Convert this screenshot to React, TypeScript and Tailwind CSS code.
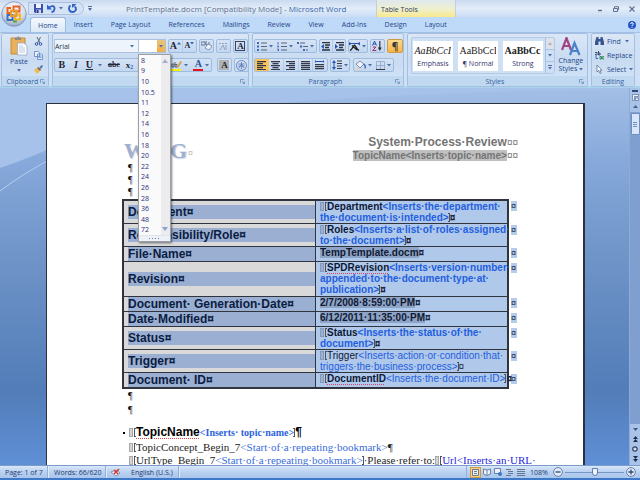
import React from "react";

const sizes = ["8", "9", "10", "10.5", "11", "12", "14", "16", "18", "20", "22", "24", "26", "28", "36", "48", "72"];
const tabs = ["Home", "Insert", "Page Layout", "References", "Mailings", "Review", "View", "Add-Ins", "Design", "Layout"];

function Down({ className = "" }: { className?: string }) {
  return (
    <svg viewBox="0 0 4 3" className={`h-[3px] w-[4px] shrink-0 ${className}`}>
      <path d="M0 0h4L2 2.6z" fill="#4c6fa8" />
    </svg>
  );
}

function Tool({ label, className = "", children }: { label: string; className?: string; children: React.ReactNode }) {
  return (
    <button aria-label={label} className={`flex h-full shrink-0 items-center justify-center gap-[2px] ${className}`}>
      {children}
    </button>
  );
}

function Strip({ className = "", children }: { className?: string; children: React.ReactNode }) {
  return (
    <div className={`flex h-[14px] shrink-0 rounded-[2px] border border-[#9ebbe0] bg-gradient-to-b from-[#d5e3f5] to-[#c3d7f0] ${className}`}>
      {children}
    </div>
  );
}

function Group({ title, launcher = true, className = "", children }: { title: string; launcher?: boolean; className?: string; children: React.ReactNode }) {
  return (
    <section className={`flex h-[54px] flex-col rounded-[2px] border border-[#a3c0e4] bg-gradient-to-b from-[#dbe7f6] via-[#c9dbf1] to-[#d3e5f8] ${className}`}>
      <div className="flex-1">{children}</div>
      <div className="flex h-[10px] items-center bg-[#c1d8f1] px-[3px] text-[#355f9e]">
        <span className="flex-1 text-center">{title}</span>
        {launcher && (
          <button aria-label={`${title} options`}>
            <svg viewBox="0 0 5 5" className="h-[5px] w-[5px]" fill="none" stroke="#6c8fc0">
              <path d="M.5 4V.5H4M2 2l2.500 2.500M4.500 2.500v2h-2" strokeWidth=".8" />
            </svg>
          </button>
        )}
      </div>
    </section>
  );
}

function Lines({ widths, x = "left" }: { widths: number[]; x?: "left" | "center" | "right" }) {
  return (
    <svg viewBox="0 0 9 9" className="h-[9px] w-[9px]" fill="#34394a">
      {widths.map((w, i) => (
        <rect key={i} x={x === "left" ? 0 : x === "right" ? 9 - w : (9 - w) / 2} y={i * 2} width={w} height="1.3" />
      ))}
    </svg>
  );
}

function OfficeButton() {
  return (
    <button aria-label="Office Button" className="absolute left-[1px] top-[1px] z-10 h-[26px] w-[26px]">
      <svg viewBox="0 0 26 26" className="h-full w-full">
        <defs>
          <radialGradient id="orb" cx=".5" cy=".3" r=".75">
            <stop offset="0" stopColor="#fff" />
            <stop offset=".6" stopColor="#d5dde9" />
            <stop offset="1" stopColor="#8498b8" />
          </radialGradient>
        </defs>
        <circle cx="13" cy="13" r="12.300" fill="url(#orb)" stroke="#7d93b8" strokeWidth=".8" />
        <g fill="none" strokeWidth="2">
          <path d="M10 7H6.500v5H10" stroke="#e8641b" />
          <path d="M12.500 5.500h6v5h-6z" stroke="#e9622a" />
          <path d="M6.500 14h5v5h-5z" stroke="#3b6fc4" />
          <path d="M14 13.500h5v5h-5z" stroke="#f1b420" />
          <path d="M10 9.500h5.500V15H10z" stroke="#e99b2d" />
          <path d="M12 20.500h4" stroke="#5aa13a" />
        </g>
      </svg>
    </button>
  );
}

function TitleBar() {
  return (
    <header className="relative flex h-[17px] items-center bg-gradient-to-b from-[#c9daf0] via-[#e3edf9] to-[#cadcf4]">
      <OfficeButton />
      <div className="ml-[28px] flex h-[13px] w-[56px] items-center rounded-r-[7px] border border-[#a9c0e0] bg-[#d5e3f5] pl-[5px]">
        <button aria-label="Save">
          <svg viewBox="0 0 9 9" className="h-[9px] w-[9px]">
            <path d="M0 0h9v9H1L0 8z" fill="#3b4fae" />
            <path d="M2 0h5v4H2z" fill="#eef3fc" />
            <path d="M2.500 5.500h4.500V9H2.500z" fill="#c8d4ee" />
            <path d="M3 6h1.500v3H3z" fill="#27347e" />
          </svg>
        </button>
        <button aria-label="Undo" className="ml-[4px]">
          <svg viewBox="0 0 9 9" className="h-[9px] w-[9px]" fill="none" stroke="#2f62c9" strokeWidth="1.800">
            <path d="M2 3.500C5 1 8 2 7.500 5 7.200 7 6 8 4.500 8.200" />
            <path d="M0 .5v5h5z" fill="#2f62c9" stroke="none" />
          </svg>
        </button>
        <Down className="ml-[3px]" />
        <button aria-label="Repeat" className="ml-[5px]">
          <svg viewBox="0 0 9 9" className="h-[9px] w-[9px]" fill="none" stroke="#2f62c9" strokeWidth="1.800">
            <path d="M2.500 1.500C0 3.500.8 8 4.500 8S9 4 6.500 2.500" />
            <path d="M4 0h4.500L4 4z" fill="#2f62c9" stroke="none" />
          </svg>
        </button>
      </div>
      <button aria-label="Customize Quick Access Toolbar" className="ml-[4px]">
        <svg viewBox="0 0 4 5" className="h-[5px] w-[4px]" fill="#4c6fa8"><path d="M0 0h4v1H0zM0 2h4L2 5z" /></svg>
      </button>
      <h1 className="ml-[34px] w-[250px] whitespace-nowrap text-[8px] text-[#5f7190]">
        PrintTemplate.docm [Compatibility Mode] - <span className="text-[#3865aa]">Microsoft Word</span>
      </h1>
      <div className="flex h-full w-[80px] items-center border-x border-[#c5cfd6] bg-gradient-to-b from-[#dfe8ee] via-[#eef0cf] to-[#f8e98c] pl-[4px] pt-[2px] text-[#2c3d66]">
        Table Tools
      </div>
      <div className="ml-auto mr-[5px] flex items-center gap-[10px]">
        <button aria-label="Minimize"><svg viewBox="0 0 6 6" className="h-[6px] w-[6px]"><path d="M1 4.500h4" stroke="#5f7391" strokeWidth="1.500" /></svg></button>
        <button aria-label="Restore"><svg viewBox="0 0 6 6" className="h-[6px] w-[6px]" fill="none" stroke="#5f7391"><path d="M1.500 2V.7h4v3H4.500M.5 2.500h4v3h-4z" /></svg></button>
        <button aria-label="Close"><svg viewBox="0 0 6 6" className="h-[6px] w-[6px]"><path d="M.5.5l5 5M5.500.5l-5 5" stroke="#5f7391" strokeWidth="1.200" /></svg></button>
      </div>
    </header>
  );
}

function Tabs() {
  return (
    <nav className="flex h-[15px] items-stretch bg-[#bfd9f8] pl-[30px]">
      {tabs.map((t, i) => (
        <button
          key={t}
          className={
            i === 0
              ? "mr-[-1px] rounded-t-[3px] border border-b-0 border-[#9db9de] bg-gradient-to-b from-[#f4f8fd] to-[#dce8f7] px-[7px] text-[#1e4689]"
              : "px-[9px] text-[#1e4689]"
          }
        >
          {t}
        </button>
      ))}
      <button aria-label="Help" className="ml-auto mr-[4px]">
        <svg viewBox="0 0 8 8" className="h-[8px] w-[8px]">
          <circle cx="4" cy="4" r="4" fill="#2457c0" />
          <path d="M2.600 3C2.600 1.300 5.400 1.300 5.400 3 5.400 4 4 3.800 4 5M4 5.700v1" stroke="#fff" fill="none" />
        </svg>
      </button>
    </nav>
  );
}

function Clipboard() {
  return (
    <Group title="Clipboard" className="w-[50px]">
      <div className="flex pl-[6px]">
        <button className="flex w-[22px] flex-col items-center pt-[2px] text-[#1e4689]">
          <svg viewBox="0 0 18 20" className="h-[20px] w-[18px]">
            <path d="M1 2h14v16H1z" fill="#e9b15c" stroke="#c58b36" />
            <path d="M5 1.500h2.500C7.500-.2 9 -.2 9 1.500H11V4H5z" fill="#8e8d8c" />
            <path d="M7.500 7H14l3 3v9H7.500z" fill="#fbfcff" stroke="#9ba9c1" strokeWidth=".8" />
            <path d="M9 10h4M9 12h6M9 14h6M9 16h6" stroke="#a8b8d4" strokeWidth=".7" />
          </svg>
          <span className="leading-[12px]">Paste</span>
          <Down className="mt-[1px]" />
        </button>
        <div className="ml-[4px] flex flex-col gap-[5px] pt-[3px]">
          <button aria-label="Cut">
            <svg viewBox="0 0 9 9" className="h-[9px] w-[9px]" fill="none" stroke="#3458a5">
              <path d="M3 0l3 6M6.500 0L3.500 6" stroke="#5a6577" />
              <circle cx="2.500" cy="7" r="1.300" /><circle cx="6.500" cy="7" r="1.300" />
            </svg>
          </button>
          <button aria-label="Copy">
            <svg viewBox="0 0 9 9" className="h-[9px] w-[9px]" fill="#e8f0fd" stroke="#5a83c4" strokeWidth=".8">
              <path d="M.5.5h4l1 1v4h-5zM3.500 3h4l1 1v4.500h-5z" /><path d="M4.500 5h3M4.500 6.500h3" />
            </svg>
          </button>
          <button aria-label="Format Painter">
            <svg viewBox="0 0 9 9" className="h-[9px] w-[9px]">
              <path d="M0 5l3-2 3 3-3 3z" fill="#eebb4d" /><path d="M3 3l1.500-1L7 4.500 6 6z" fill="#81634a" /><path d="M5.500 2L8 0l1 1-2 3z" fill="#4c72b6" />
            </svg>
          </button>
        </div>
      </div>
    </Group>
  );
}

function FontSizeMenu() {
  return (
    <div className="absolute left-[-1px] top-[14px] z-20 flex h-[188px] w-[33px] flex-col border border-[#9a9fa8] bg-[#fafafa] shadow-[1px_1px_2px_rgba(0,0,0,0.5)]">
      <div className="flex flex-1">
        <ul className="flex flex-1 flex-col text-[#2c2f7c]">
          {sizes.map((s) => (
            <li key={s} className="flex min-h-0 flex-1 items-center">
              <button className="h-full pl-[2px] leading-none">{s}</button>
            </li>
          ))}
        </ul>
        <div className="flex w-[9px] flex-col items-center justify-between bg-[#ececee] py-[4px]">
          <svg viewBox="0 0 6 4" className="h-[4px] w-[6px]"><path d="M0 4h6L3 0z" fill="#a4b0cc" /></svg>
          <svg viewBox="0 0 6 4" className="h-[4px] w-[6px]"><path d="M0 0h6L3 4z" fill="#8ba0cf" /></svg>
        </div>
      </div>
      <div className="flex h-[6px] items-center justify-center gap-[2px] border-t border-[#dfe3ea] bg-[#eef2f8]">
        {[0, 1, 2, 3].map((i) => <i key={i} className="h-px w-px bg-[#6d7ea8]" />)}
      </div>
    </div>
  );
}

function FontGroup() {
  const serif = "font-['Liberation_Serif',serif] text-[#222838]";
  return (
    <Group title="Font" className="w-[197px]">
      <div className="flex flex-col gap-[5px] pl-[1px] pt-[5px]">
        <div className="flex h-[14px]">
          <div className="flex w-[85px] items-center border border-[#abc1de] bg-[#eef4fc] pr-[4px]">
            <select aria-label="Font" className="w-full appearance-none bg-transparent text-[#26303f]">
              <option>Arial</option>
            </select>
            <Down />
          </div>
          <div className="relative flex w-[27px] border border-l-0 border-[#abc1de]">
            <input aria-label="Font Size" className="w-[18px] bg-white" />
            <button aria-label="Choose size" className="flex w-[8px] items-center justify-center bg-gradient-to-b from-[#e8c47c] to-[#f3ad3b]"><Down /></button>
            <FontSizeMenu />
          </div>
          <Strip className="ml-[2px] w-[29px]">
            <Tool label="Grow Font" className={`w-[14px] border-r border-[#b5cbe8] text-[10px] font-bold ${serif}`}>A<svg viewBox="0 0 4 8" className="-ml-[2px] h-[8px] w-[4px]"><path d="M0 2.500h4L2 0z" fill="#3562b5" /></svg></Tool>
            <Tool label="Shrink Font" className={`w-[13px] text-[8px] font-bold ${serif}`}>A<svg viewBox="0 0 4 8" className="-ml-[2px] h-[8px] w-[4px]"><path d="M0 0h4L2 2.500z" fill="#3562b5" /></svg></Tool>
          </Strip>
          <Strip className="ml-[2px] w-[15px]">
            <Tool label="Clear Formatting" className="w-full">
              <svg viewBox="0 0 11 10" className="h-[10px] w-[11px]"><path d="M0 4V1h4v3zM5 0v4h3V1" fill="none" stroke="#5f6b83" strokeWidth=".9" /><path d="M4 7l3-4 4 2-3 4z" fill="#f3f5fb" stroke="#6a7db0" strokeWidth=".8" /></svg>
            </Tool>
          </Strip>
          <Strip className="ml-[2px] w-[15px]">
            <Tool label="Phonetic Guide" className="w-full">
              <svg viewBox="0 0 11 10" className="h-[10px] w-[11px]" fill="none" stroke="#94a5c2"><path d="M1 2.500h2M4 2.500h2M7 2.500h2M2 9l3-5 2 5M8 4v5" /></svg>
            </Tool>
          </Strip>
          <Strip className="ml-[2px] w-[15px]">
            <Tool label="Character Border" className="w-full"><span className={`flex h-[10px] w-[10px] items-center justify-center border border-[#39435c] text-[9px] font-bold leading-none ${serif}`}>A</span></Tool>
          </Strip>
        </div>
        <div className="flex h-[14px]">
          <Strip className="w-[112px]">
            <Tool label="Bold" className={`w-[14px] text-[10px] font-bold ${serif}`}>B</Tool>
            <Tool label="Italic" className={`w-[14px] text-[10px] font-bold italic ${serif}`}>I</Tool>
            <Tool label="Underline" className={`w-[22px] text-[10px] font-bold ${serif}`}><span className="underline">U</span><Down className="ml-[3px]" /></Tool>
            <Tool label="Strikethrough" className={`w-[18px] text-[8px] font-bold line-through ${serif}`}>abc</Tool>
            <Tool label="Subscript" className={`w-[13px] text-[9px] font-bold ${serif}`}>x<sub className="-ml-[2px] text-[6px] text-[#3562b5]">2</sub></Tool>
          </Strip>
          <Strip className="ml-[2px] w-[44px]">
            <Tool label="Text Highlight Color" className="w-[22px]">
              <svg viewBox="0 0 11 11" className="h-[11px] w-[11px]"><path d="M0 9h10v2H0z" fill="#fbf400" /><path d="M1 4h2v3H1zM4 2v5h2V4.500H4" stroke="#4c5468" fill="none" strokeWidth=".9" /><path d="M5.500 7L9.500 1l1.500 1-4 6z" fill="#d7a040" /></svg>
              <Down />
            </Tool>
            <Tool label="Font Color" className="w-[21px]">
              <span className="flex h-[11px] w-[10px] items-center justify-center border-b-2 border-[#e5131b] font-['Liberation_Serif',serif] text-[10px] font-bold leading-none text-[#2f4f9a]">A</span>
              <Down />
            </Tool>
          </Strip>
          <Strip className="ml-[5px] w-[15px]">
            <Tool label="Character Shading" className="w-full"><span className={`flex h-[10px] w-[10px] items-center justify-center bg-[#b1b1b1] text-[9px] font-bold leading-none ${serif}`}>A</span></Tool>
          </Strip>
          <Strip className="ml-[2px] w-[15px]">
            <Tool label="Enclose Characters" className="w-full">
              <svg viewBox="0 0 11 11" className="h-[11px] w-[11px]" fill="none" stroke="#6585b8" strokeWidth=".9"><circle cx="5.500" cy="5.500" r="5" /><path d="M2.500 4h6M5.500 2v7M3 8l2.500-4L8 8M2.500 6h6" /></svg>
            </Tool>
          </Strip>
        </div>
      </div>
    </Group>
  );
}

function Paragraph() {
  return (
    <Group title="Paragraph" className="w-[152px]">
      <div className="flex flex-col gap-[5px] pl-[1px] pt-[5px]">
        <div className="flex h-[14px]">
          <Strip className="w-[63px]">
            <Tool label="Bullets" className="w-[20px]">
              <svg viewBox="0 0 10 9" className="h-[9px] w-[10px]"><path d="M0 0h2v2H0zM0 3.500h2v2H0zM0 7h2v2H0z" fill="#3c68bd" /><path d="M4 1h6M4 4.500h6M4 8h6" stroke="#59657d" /></svg><Down />
            </Tool>
            <Tool label="Numbering" className="w-[21px]">
              <svg viewBox="0 0 10 9" className="h-[9px] w-[10px]"><path d="M1 0v2.500M.3 4h1.200v1H.3M.3 7h1.200v2H.3" stroke="#3c68bd" fill="none" /><path d="M4 1h6M4 4.500h6M4 8h6" stroke="#59657d" /></svg><Down />
            </Tool>
            <Tool label="Multilevel List" className="w-[20px]">
              <svg viewBox="0 0 11 9" className="h-[9px] w-[11px]"><path d="M0 0h2v2H0zM3 3.500h2v2H3zM6 7h2v2H6z" fill="#3c68bd" /><path d="M3 1h5M6 4.500h5M9 8h2" stroke="#59657d" /></svg><Down />
            </Tool>
          </Strip>
          <Strip className="ml-[2px] w-[27px]">
            <Tool label="Decrease Indent" className="w-[13px] border-r border-[#b5cbe8]">
              <svg viewBox="0 0 9 9" className="h-[9px] w-[9px]"><path d="M0 4.500l3-2.500v5z" fill="#2854b4" /><path d="M1 .6h8M4 3h5M4 5.500h4M1 8h8" stroke="#2a3040" strokeWidth="1.300" /></svg>
            </Tool>
            <Tool label="Increase Indent" className="w-[13px]">
              <svg viewBox="0 0 9 9" className="h-[9px] w-[9px]"><path d="M3 4.500L0 2v5z" fill="#2854b4" /><path d="M1 .6h8M4 3h5M4 5.500h4M1 8h8" stroke="#2a3040" strokeWidth="1.300" /></svg>
            </Tool>
          </Strip>
          <Strip className="ml-[2px] w-[20px]">
            <Tool label="Asian Layout" className="w-full">
              <svg viewBox="0 0 11 9" className="h-[9px] w-[11px]"><path d="M1 8.500C3 8 5 3 5.500 3S8 8 10 8.500M3 3.500L8 8" stroke="#222" strokeWidth="1.300" fill="none" /><path d="M0 0v3.500L3 1.500zM11 0v3.500L8 1.500z" fill="#2854b4" /><path d="M2 1.500h7" stroke="#2854b4" /></svg><Down />
            </Tool>
          </Strip>
          <Strip className="ml-[2px] w-[15px]">
            <Tool label="Sort" className="w-full">
              <svg viewBox="0 0 10 10" className="h-[10px] w-[10px]" fill="none"><path d="M.5 4.500L2.500 0l2 4.500M1 3h3" stroke="#2854b4" /><path d="M.8 6h3L.8 9.500h3.500" stroke="#a32c65" /><path d="M7.800 0v8" stroke="#333" strokeWidth="1.200" /><path d="M5.800 6.500h4L7.800 10z" fill="#333" /></svg>
            </Tool>
          </Strip>
          <div className="ml-[2px] flex h-[14px] w-[16px] rounded-[2px] border border-[#c99c4b] bg-gradient-to-b from-[#fbd98e] to-[#f9b544]">
            <Tool label="Show/Hide" className="w-full text-[10px] font-bold text-[#3d3a35]">¶</Tool>
          </div>
        </div>
        <div className="flex h-[14px]">
          <Strip className="w-[74px]">
            <Tool label="Align Left" className="w-[14px] bg-[#fbc45d]"><Lines widths={[9, 6, 9, 6, 9]} /></Tool>
            <Tool label="Center" className="w-[15px] border-r border-[#b5cbe8]"><Lines widths={[9, 6, 9, 6, 9]} x="center" /></Tool>
            <Tool label="Align Right" className="w-[15px] border-r border-[#b5cbe8]"><Lines widths={[9, 6, 9, 6, 9]} x="right" /></Tool>
            <Tool label="Justify" className="w-[14px] border-r border-[#b5cbe8]"><Lines widths={[9, 9, 9, 9, 9]} /></Tool>
            <Tool label="Distributed" className="w-[14px]">
              <svg viewBox="0 0 9 10" className="h-[10px] w-[9px]"><path d="M0 1.500h9M0 0v3M9 0v3" stroke="#2854b4" /><path d="M0 4h9v1.300H0zM0 6h9v1.300H0zM0 8h9v1.300H0z" fill="#34394a" /></svg>
            </Tool>
          </Strip>
          <Strip className="ml-[2px] w-[20px]">
            <Tool label="Line Spacing" className="w-full">
              <svg viewBox="0 0 10 10" className="h-[10px] w-[10px]"><path d="M0 3h4L2 0zM0 7h4l-2 3z" fill="#2854b4" /><path d="M2 2v6" stroke="#2854b4" /><path d="M5 1h5M5 3.500h5M5 6h5M5 8.500h5" stroke="#34394a" /></svg><Down />
            </Tool>
          </Strip>
          <Strip className="ml-[3px] w-[41px]">
            <Tool label="Shading" className="w-[20px]">
              <svg viewBox="0 0 11 10" className="h-[10px] w-[11px]"><path d="M1 4l4-3 4 3-4 4z" fill="#eef3fb" stroke="#7387aa" strokeWidth=".9" /><path d="M8.500 4c2 1 2 3 1.500 4.500" stroke="#2d64bf" strokeWidth="1.300" fill="none" /><path d="M0 8.600h7V10H0z" fill="#e3d1c0" /></svg><Down />
            </Tool>
            <Tool label="Borders" className="w-[20px]">
              <svg viewBox="0 0 9 9" className="h-[9px] w-[9px]" fill="none"><path d="M.5.5h8v8M.5.5v8M4.500 0v9M0 4.500h9" stroke="#8fa5c8" strokeWidth=".8" /><path d="M0 8.500h9" stroke="#34394a" /></svg><Down />
            </Tool>
          </Strip>
        </div>
      </div>
    </Group>
  );
}

function Style({ sample, name }: { sample: string; name: string }) {
  const look = name === "Emphasis" ? "italic" : name === "Strong" ? "font-bold" : "";
  return (
    <button className="flex h-[30px] w-[40px] shrink-0 flex-col items-center bg-white pt-[3px]">
      <span className={`w-[37px] overflow-hidden whitespace-nowrap text-left font-['Liberation_Serif',serif] text-[10px] leading-[14px] text-[#222] ${look}`}>{sample}</span>
      <span className="leading-[12px] text-[#34356f]">{name}</span>
    </button>
  );
}

function Styles() {
  return (
    <Group title="Styles" className="min-w-[181px] flex-1">
      <div className="flex pl-[3px] pt-[3px]">
        <div className="flex h-[37px] min-w-0 flex-1 overflow-hidden rounded-[2px] border border-[#b3c9e6] bg-[#cfe0f4]">
          <div className="flex flex-1 gap-[5px] py-[3px] pl-px">
            <Style sample="AaBbCcI" name="Emphasis" />
            <Style sample="AaBbCcI" name="¶ Normal" />
            <Style sample="AaBbCcI" name="Strong" />
          </div>
          <div className="flex w-[9px] flex-col border-l border-[#a9c2e3]">
            <button aria-label="Styles up" className="flex flex-1 items-center justify-center bg-[#dfe3e9]"><svg viewBox="0 0 4 3" className="h-[3px] w-[4px]"><path d="M0 3h4L2 0z" fill="#a7b1c2" /></svg></button>
            <button aria-label="Styles down" className="flex flex-1 items-center justify-center border-y border-[#a9c2e3] bg-[#cfe0f6]"><Down /></button>
            <button aria-label="More styles" className="flex flex-1 flex-col items-center justify-center gap-px bg-[#cfe0f6]"><i className="h-px w-[4px] bg-[#4c6fa8]" /><Down /></button>
          </div>
        </div>
        <button className="flex w-[32px] flex-col items-center text-[#1e4689]">
          <svg viewBox="0 0 20 20" className="h-[20px] w-[20px]" fill="none" strokeWidth="2.200">
            <path d="M1 13L5.500 1 10 13M3 9h5" stroke="#a24482" />
            <path d="M9 18l4.500-12L18.500 18M11 14h5" stroke="#4b80cd" />
          </svg>
          <span className="leading-[8px]">Change</span>
          <span className="flex items-center gap-[2px] leading-[8px]">Styles <Down /></span>
        </button>
      </div>
    </Group>
  );
}

function Editing() {
  const row = "flex h-[14px] items-center text-[#1e4689]";
  return (
    <Group title="Editing" launcher={false} className="w-[46px]">
      <div className="flex flex-col pl-[3px]">
        <button className={row}>
          <svg viewBox="0 0 9 8" className="mr-[3px] h-[8px] w-[9px]" fill="#37558f"><path d="M1.500 0h2v2h2V0h2L9 5v3H5.500V4.500h-2V8H0V5z" /></svg>
          Find <Down className="ml-[4px]" />
        </button>
        <button className={row}>
          <svg viewBox="0 0 9 9" className="mr-[3px] h-[9px] w-[9px]" fill="none"><path d="M0 1.500h2v2.500H.5V3M3.500 0v4H5V2H4" stroke="#3f4e70" /><path d="M5 5.500h1.500V8H5zM9 5.500H7.800V8H9" stroke="#2c8a55" /><path d="M1 5v2.500h2" stroke="#3c68bd" /></svg>
          Replace
        </button>
        <button className={row}>
          <svg viewBox="0 0 9 9" className="mr-[3px] h-[9px] w-[9px]"><path d="M2 0v7l1.700-1.500L5 8.500l1.200-.6L5 5.200h2z" fill="#fff" stroke="#5e7197" strokeWidth=".8" /></svg>
          Select <Down className="ml-[3px]" />
        </button>
      </div>
    </Group>
  );
}

function Field({ name, hint, spell = false, tight = false }: { name: string; hint: React.ReactNode; spell?: boolean; tight?: boolean }) {
  return (
    <>
      <Mark />
      <span className={`text-[#0c1838] ${spell ? "underline decoration-[#d2486b] decoration-dotted decoration-1 underline-offset-2" : ""}`}>{name}</span>
      <span className={`text-[#1f5fe0] ${tight ? "font-normal" : ""}`}>{hint}</span>
      <Bracket />
    </>
  );
}

function Mark({ gray = false }: { gray?: boolean }) {
  return (
    <span aria-hidden="true" className="inline-flex h-[9px] items-stretch gap-px align-[-1px]">
      <i className={`w-[4px] border ${gray ? "border-[#a8a8a8] bg-[#d4d4d4]" : "border-[#8499bd] bg-[#9db0d0]"}`} />
      <i className="w-[2px] border-y border-l border-[#4b5465]" />
    </span>
  );
}

function Bracket() {
  return <i aria-hidden="true" className="-ml-px inline-block h-[9px] w-[2px] border-y border-r border-[#4b5465] align-[-1px]" />;
}

const end = <span className="text-[#1b2440]">¤</span>;

const rows: { label: string; h: string; value: React.ReactNode }[] = [
  { label: "Document", h: "h-[24px]", value: <><Field name="Department" hint={<>&lt;Inserts·the·department·<br />the·document·is·intended&gt;</>} />{end}</> },
  { label: "Responsibility/Role", h: "h-[23px]", value: <><Field name="Roles" hint={<>&lt;Inserts·a·list·of·roles·assigned·<br />to·the·document&gt;</>} />{end}</> },
  { label: "File·Name", h: "h-[15px]", value: <><span className="bg-[#8ea4c6]">TempTemplate.docm</span>{end}</> },
  { label: "Revision", h: "h-[35px]", value: <><Field spell name="SPDRevision" hint={<>&lt;Inserts·version·number·<br />appended·to·the·document·type·at·<br />publication&gt;</>} />{end}</> },
  { label: "Document· Generation·Date", h: "h-[15px]", value: <><span className="bg-[#8ea4c6]">2/7/2008·8:59:00·PM</span>{end}</> },
  { label: "Date·Modified", h: "h-[15px]", value: <><span className="bg-[#8ea4c6]">6/12/2011·11:35:00·PM</span>{end}</> },
  { label: "Status", h: "h-[23px]", value: <><Field name="Status" hint={<>&lt;Inserts·the·status·of·the·<br />document&gt;</>} />{end}</> },
  { label: "Trigger", h: "h-[23px]", value: <span className="font-normal"><Field tight name="Trigger" hint={<>&lt;Inserts·action·or·condition·that·<br />triggers·the·business·process&gt;</>} />{end}</span> },
  { label: "Document· ID", h: "h-[17px]", value: <><Field spell tight name="DocumentID" hint="<Inserts·the·document·ID>" />{end}</> },
];

function Para({ className = "" }: { className?: string }) {
  return <p className={`pl-[6px] font-['Liberation_Serif',serif] text-[10px] text-[#111] ${className}`}>¶</p>;
}

function Page() {
  return (
    <main className="relative mt-[15px] min-w-0 flex-1 overflow-hidden border-l border-t border-r-2 border-[#2c3140] bg-white px-[75px] pt-[31px] font-['Liberation_Sans',sans-serif]">
      <div className="-mr-[10px] flex h-[27px] items-start justify-between">
        <div className="-mt-px ml-[2px] flex w-[80px] items-center whitespace-nowrap font-['Liberation_Serif',serif] text-[22px] font-bold leading-[30px] text-[#9fb0cc] [text-shadow:1px_1px_1px_#c9d3e4]">
          <span className="w-[46px]">W</span>
          <span>G</span>
          <span className="ml-px pt-[4px] text-[9px] font-normal text-[#777] [text-shadow:none]">¤</span>
        </div>
        <div className="whitespace-nowrap text-right font-bold text-[#747474]">
          <div className="text-[12px] leading-[15px]">System·Process·Review<span className="text-[10px] font-normal">¤¤</span></div>
          <div className="text-[10px] leading-[12px]"><span className="bg-[#c0c0c0]">TopicName&lt;Inserts·topic·name&gt;</span><span className="font-normal">¤¤</span></div>
        </div>
      </div>
      <Para className="h-[12px] leading-[12px]" />
      <Para className="h-[12px] leading-[12px]" />
      <Para className="h-[13px] leading-[12px]" />
      <div className="-mr-[9px]">
        <table className="w-full table-fixed border-separate border-spacing-0">
          <colgroup><col className="w-[193px]" /><col /><col className="w-[8px]" /></colgroup>
          <tbody>
            {rows.map((r, i) => {
              const edge = `${i === 0 ? "border-t-2" : "border-t"} ${i === rows.length - 1 ? "border-b-2" : ""} border-[#30343f]`;
              return (
                <tr key={r.label} className={r.h}>
                  <th className={`border-l-2 bg-[#d9d9d9] p-0 pl-[4px] text-left align-middle ${edge}`}>
                    <div className="h-[14px] whitespace-nowrap bg-[#9aafd1] text-[12px] leading-[14px] text-[#0b1c42]">{r.label}<span>¤</span></div>
                  </th>
                  <td className={`whitespace-nowrap border-l border-r-2 bg-[#b0c8ea] p-0 pl-[4px] align-top text-[10px] font-bold leading-[11px] text-[#101a35] ${edge}`}>{r.value}</td>
                  <td className="p-0 pl-[2px] pt-[2px] align-top text-[9px] leading-[10px] text-[#1b2440]"><span className="block bg-[#b6cbea]">¤</span></td>
                </tr>
              );
            })}
          </tbody>
        </table>
      </div>
      <Para className="h-[14px] leading-[13px]" />
      <Para className="h-[14px] leading-[13px]" />
      <h2 className="relative mt-[7px] h-[16px] whitespace-nowrap pl-[7px] text-[12px] font-bold leading-[16px] text-black before:absolute before:left-[1px] before:top-[8px] before:h-[2px] before:w-[2px] before:bg-black">
        <Mark gray />
        <span className="underline decoration-[#e04a4a] decoration-dotted decoration-1 underline-offset-2">TopicName</span>
        <span className="font-['Liberation_Serif',serif] text-[10px] text-[#2b63e0]">&lt;Inserts· topic·name&gt;</span>
        <Bracket />¶
      </h2>
      <div className="mt-px whitespace-nowrap pl-[7px] font-['Liberation_Serif',serif] text-[11px] leading-[13px] text-[#1c1c1c]">
        <p><Mark gray />TopicConcept_Begin_7<span className="text-[#3a6ddb]">&lt;Start·of·a·repeating·bookmark&gt;</span>¶</p>
        <p><Mark gray />UrlType_Begin_7<span className="text-[#3a6ddb]">&lt;Start·of·a·repeating·bookmark&gt;</span><Bracket />·Please·refer·to:<Mark gray /><span className="text-[#2626e0]"><span className="underline decoration-[#e04a4a] decoration-dotted decoration-1">Url</span>&lt;Inserts·an·URL·</span></p>
      </div>
    </main>
  );
}

function ScrollBar() {
  return (
    <aside className="relative flex w-[11px] flex-col items-center border-l border-[#8fabd6] bg-[#a9c3e8]">
      <i className="mt-[2px] h-[2px] w-[6px] bg-[#33496f]" />
      <button aria-label="View Ruler" className="mt-[2px]"><svg viewBox="0 0 7 7" className="h-[7px] w-[7px]" fill="#eef3fb" stroke="#6a7d9f"><path d="M.5.5h6v2h-4v4h-2zM3.500 4h3v2.500h-3z" strokeWidth=".8" /></svg></button>
      <button aria-label="Scroll up" className="flex h-[11px] items-center"><svg viewBox="0 0 5 3" className="h-[3px] w-[5px]"><path d="M0 3h5L2.500 0z" fill="#42608f" /></svg></button>
      <div className="flex w-full flex-1 justify-center bg-[#7f9fd0]">
        <div className="mt-px flex h-[22px] w-[9px] flex-col items-center justify-center gap-px rounded-[1px] border border-[#6e8fc2] bg-[#d9e6f8]">
          <i className="h-px w-[4px] bg-[#6e8fc2]" /><i className="h-px w-[4px] bg-[#6e8fc2]" /><i className="h-px w-[4px] bg-[#6e8fc2]" />
        </div>
      </div>
      <button aria-label="Scroll down" className="flex h-[10px] items-center"><svg viewBox="0 0 5 3" className="h-[3px] w-[5px]"><path d="M0 0h5L2.500 3z" fill="#3c5788" /></svg></button>
      <button aria-label="Previous Page" className="mt-[2px]"><svg viewBox="0 0 5 6" className="h-[6px] w-[5px]" fill="#1f2c47"><path d="M0 3h5L2.500 0zM0 6h5L2.500 3z" /></svg></button>
      <button aria-label="Browse Object" className="mt-[4px]"><svg viewBox="0 0 6 6" className="h-[6px] w-[6px]"><circle cx="3" cy="3" r="2.200" fill="#d7e3f5" stroke="#2b3a57" strokeWidth="1.200" /></svg></button>
      <button aria-label="Next Page" className="mb-[3px] mt-[4px]"><svg viewBox="0 0 5 6" className="h-[6px] w-[5px]" fill="#1f2c47"><path d="M0 0h5L2.500 3zM0 3h5L2.500 6z" /></svg></button>
    </aside>
  );
}

function StatusBar() {
  const cell = "flex h-full items-center border-r border-[#93b0da] shadow-[1px_0_0_#dfeafa]";
  return (
    <footer className="flex h-[15px] shrink-0 items-center border-b-2 border-t border-b-[#3f78c8] border-t-[#7b9bcb] bg-gradient-to-b from-[#d9e7f9] via-[#b9d1f0] to-[#a9c6ec] text-[#1c3970]">
      <span className={`${cell} w-[48px] pl-[5px]`}>Page: 1 of 7</span>
      <span className={`${cell} w-[58px] pl-[6px]`}>Words: 66/620</span>
      <span className={`${cell} w-[73px] pl-[5px]`}>
        <svg viewBox="0 0 10 9" className="mr-[10px] h-[9px] w-[10px]"><path d="M0 4l5-2 4 3-4 3z" fill="#eef2fb" stroke="#6d80ad" strokeWidth=".8" /><path d="M3 2l4 4M8 1L3 6" stroke="#d8322c" strokeWidth="1.400" /></svg>
        English (U.S.)
      </span>
      <div className="ml-auto flex h-full items-center border-l border-[#93b0da] pl-[3px]">
        <button aria-label="Print Layout" className="flex h-[11px] w-[11px] items-center justify-center border border-[#c99c4b] bg-[#fbcf7e]"><svg viewBox="0 0 7 7" className="h-[7px] w-[7px]" fill="#eee" stroke="#4c5d80"><path d="M.5.5h6v6h-6zM2 2.500h3M2 4.500h3" strokeWidth=".8" /></svg></button>
        <button aria-label="Full Screen Reading" className="ml-[2px]"><svg viewBox="0 0 8 8" className="h-[8px] w-[8px]" fill="#edf2fa" stroke="#526b98"><path d="M.5 1l3.500 1 3.500-1v5L4 7.500.5 6zM4 2v5" strokeWidth=".8" /></svg></button>
        <button aria-label="Web Layout" className="ml-[3px]"><svg viewBox="0 0 8 8" className="h-[8px] w-[8px]"><path d="M.5.5h6v5h-6z" fill="#edf2fa" stroke="#526b98" strokeWidth=".8" /><circle cx="6" cy="6" r="2" fill="#3c78c0" /></svg></button>
        <button aria-label="Outline" className="ml-[4px]"><svg viewBox="0 0 8 8" className="h-[8px] w-[8px]" stroke="#66748f" fill="none"><path d="M0 1.500h5M2 3.500h5M2 5.500h5M0 7.500h5" /></svg></button>
        <button aria-label="Draft" className="ml-[3px]"><svg viewBox="0 0 8 8" className="h-[8px] w-[8px]" stroke="#66748f"><path d="M0 1.500h8M0 3.500h8M0 5.500h8M0 7.500h8" /></svg></button>
      </div>
      <span className="ml-[5px] w-[23px]">108%</span>
      <button aria-label="Zoom Out"><svg viewBox="0 0 10 10" className="h-[10px] w-[10px]"><circle cx="5" cy="5" r="4.400" fill="#dfe9f7" stroke="#6a82aa" /><path d="M2.500 5h5" stroke="#324a75" strokeWidth="1.300" /></svg></button>
      <input
        aria-label="Zoom" type="range" min="10" max="200" defaultValue="108"
        className="mx-[2px] h-[9px] w-[59px] appearance-none bg-[linear-gradient(#7795c6,#7795c6)] bg-[length:100%_1px] bg-center bg-no-repeat [&::-webkit-slider-thumb]:h-[8px] [&::-webkit-slider-thumb]:w-[6px] [&::-webkit-slider-thumb]:appearance-none [&::-webkit-slider-thumb]:rounded-b-[3px] [&::-webkit-slider-thumb]:border [&::-webkit-slider-thumb]:border-[#5f7bab] [&::-webkit-slider-thumb]:bg-[#eef4fd]"
      />
      <button aria-label="Zoom In" className="mr-[4px]"><svg viewBox="0 0 10 10" className="h-[10px] w-[10px]"><circle cx="5" cy="5" r="4.400" fill="#dfe9f7" stroke="#6a82aa" /><path d="M2.500 5h5M5 2.500v5" stroke="#324a75" strokeWidth="1.300" /></svg></button>
    </footer>
  );
}

export default function App() {
  return (
    <div className="flex h-screen flex-col overflow-hidden bg-[#bfd9f8] font-['Open_Sans','Noto_Sans',sans-serif] text-[7px] leading-none">
      <TitleBar />
      <Tabs />
      <div className="relative z-10 flex h-[56px] shrink-0 gap-[3px] border-b-2 border-t border-b-[#a9d3ea] border-t-[#a3c0e4] bg-[#cfe0f4] pl-px pr-[5px]">
        <Clipboard />
        <FontGroup />
        <Paragraph />
        <Styles />
        <Editing />
      </div>
      <div className="relative flex min-h-0 flex-1">
        <svg viewBox="0 0 640 377" preserveAspectRatio="none" className="absolute inset-0 h-full w-full">
          <defs>
            <linearGradient id="swoosh" x1="0" y1="0" x2="0" y2="1">
              <stop offset="0" stopColor="#a3bfe6" />
              <stop offset=".2" stopColor="#86a8da" />
              <stop offset=".45" stopColor="#6f94c8" />
              <stop offset=".8" stopColor="#527db8" />
              <stop offset="1" stopColor="#5f8fd6" />
            </linearGradient>
          </defs>
          <path d="M0 0h640v377H0z" fill="#a6c2ea" />
          <path d="M0 80Q30 70 60 56Q110 10 640 0V377H0z" fill="url(#swoosh)" />
          <path d="M0 103Q22 86 60 66" fill="none" stroke="#b7cdee" strokeWidth="1" />
        </svg>
        <div className="relative flex min-w-0 flex-1 pl-[46px]">
          <Page />
          <div className="w-[44px] shrink-0" />
          <ScrollBar />
        </div>
      </div>
      <StatusBar />
    </div>
  );
}
